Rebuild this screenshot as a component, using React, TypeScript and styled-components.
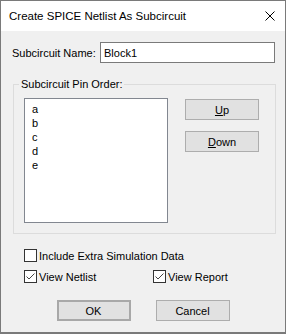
import { createGlobalStyle, styled } from "styled-components";

const GlobalStyle = createGlobalStyle`
  html, body {
    margin: 0;
    padding: 0;
    background: #ffffff;
  }
  * {
    box-sizing: border-box;
  }
`;

const Window = styled.div`
  width: 286px;
  height: 334px;
  border: 1px solid #7a7a7a;
  border-bottom-width: 2px;
  background: #f0f0f0;
  display: flex;
  flex-direction: column;
  font-family: "Liberation Sans", Arial, sans-serif;
  font-size: 11px;
  color: #000;
`;

const TitleBar = styled.div`
  height: 30px;
  background: #ffffff;
  display: flex;
  align-items: center;
  padding-left: 8px;
  padding-right: 10px;
  font-size: 11.5px;
`;

const Title = styled.span`
  flex: 1;
  line-height: 14px;
`;

const Body = styled.div`
  padding: 11px 9px 0 11px;
  display: flex;
  flex-direction: column;
`;

const NameRow = styled.div`
  display: flex;
  align-items: center;
  height: 21px;
`;

const Label = styled.span`
  flex: 1;
  line-height: 14px;
`;

const TextBox = styled.input`
  width: 175px;
  height: 21px;
  margin: 0 1px 0 0;
  border: 1px solid #7a7a7a;
  background: #ffffff;
  padding: 0 3px;
  font: inherit;
  color: #000;
  outline: none;
`;

const Group = styled.fieldset`
  margin: 14px 0 0 1px;
  border: 1px solid #dcdcdc;
  padding: 7px 16px 10px 10px;
  display: flex;
`;

const Legend = styled.legend`
  margin-left: -5px;
  padding: 0 2px;
  line-height: 14px;
`;

const ListBox = styled.div`
  width: 144px;
  height: 125px;
  border: 1px solid #828790;
  background: #ffffff;
  padding: 3px 7px 0;
`;

const ListItem = styled.div`
  line-height: 14px;
`;

const SideButtons = styled.div`
  margin-left: auto;
  margin-top: 1px;
  display: flex;
  flex-direction: column;
  gap: 11px;
`;

const Button = styled.button<{ $default?: boolean }>`
  width: 74px;
  height: 21px;
  padding: 0;
  background: #e1e1e1;
  border: ${(p) => (p.$default ? "2px solid #a8a8a8" : "1px solid #adadad")};
  font: inherit;
  color: #000;
  line-height: 14px;

  u {
    text-decoration: underline;
    text-underline-offset: 1px;
  }
`;

const Options = styled.div`
  margin: 15px 0 0 12px;
  display: grid;
  grid-template-columns: 129px auto;
  row-gap: 8px;
`;

const CheckRow = styled.label<{ $span?: boolean }>`
  display: flex;
  align-items: center;
  gap: 2px;
  height: 13px;
  grid-column: ${(p) => (p.$span ? "1 / span 2" : "auto")};
`;

const Box = styled.span`
  width: 13px;
  height: 13px;
  border: 1px solid #333333;
  background: #ffffff;
  display: flex;
  align-items: center;
  justify-content: center;
`;

const CheckText = styled.span`
  line-height: 14px;
`;

const Footer = styled.div`
  margin-top: 17px;
  margin-left: -11px;
  margin-right: -9px;
  display: flex;
  justify-content: center;
  gap: 25px;
`;

function CheckBox({ checked, label, span }: { checked?: boolean; label: string; span?: boolean }) {
  return (
    <CheckRow $span={span}>
      <Box>
        {checked && (
          <svg width="11" height="11" viewBox="0 0 11 11">
            <polyline points="1.5,5.5 4,8 9.5,2.5" fill="none" stroke="#444" strokeWidth="1" />
          </svg>
        )}
      </Box>
      <CheckText>{label}</CheckText>
    </CheckRow>
  );
}

export default function App() {
  const pins = ["a", "b", "c", "d", "e"];
  return (
    <>
      <GlobalStyle />
      <Window>
        <TitleBar>
          <Title>Create SPICE Netlist As Subcircuit</Title>
          <svg width="10" height="10" viewBox="0 0 10 10">
            <path d="M0.5 0.5 L9.5 9.5 M9.5 0.5 L0.5 9.5" stroke="#000" strokeWidth="1" />
          </svg>
        </TitleBar>
        <Body>
          <NameRow>
            <Label>Subcircuit Name:</Label>
            <TextBox defaultValue="Block1" />
          </NameRow>
          <Group>
            <Legend>Subcircuit Pin Order:</Legend>
            <ListBox>
              {pins.map((p) => (
                <ListItem key={p}>{p}</ListItem>
              ))}
            </ListBox>
            <SideButtons>
              <Button>
                <u>U</u>p
              </Button>
              <Button>
                <u>D</u>own
              </Button>
            </SideButtons>
          </Group>
          <Options>
            <CheckBox label="Include Extra Simulation Data" span />
            <CheckBox label="View Netlist" checked />
            <CheckBox label="View Report" checked />
          </Options>
          <Footer>
            <Button $default>OK</Button>
            <Button>Cancel</Button>
          </Footer>
        </Body>
      </Window>
    </>
  );
}
